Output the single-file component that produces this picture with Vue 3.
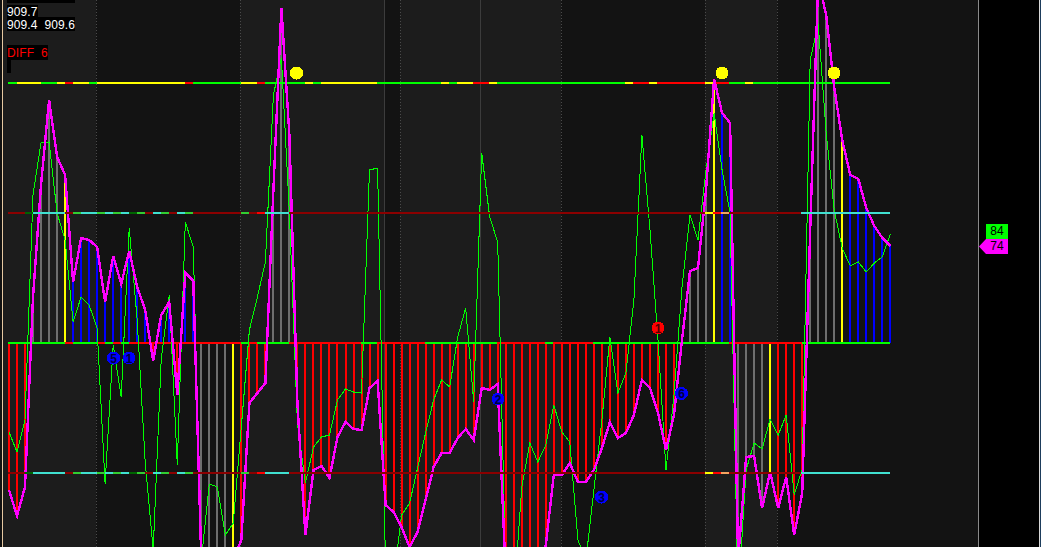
<script setup>
const H = 547
const xAt = (k) => 9 + 8.012 * k

const magenta = [490,516,487,297,185,100,157,175,282,238,240,247,302,256,284,251,287,310,361,315,302,395,273,281,
  560,600,600,600,560,540,403,393,383,190,8,135,403,535,470,466,478,437,422,429,430,388,381,505,512,527,547,532,500,467,453,453,438,429,440,388,390,384,
  575,600,600,600,570,545,475,475,463,482,482,470,448,422,438,433,415,380,388,413,450,415,340,271,268,190,79,113,123,560,457,456,508,472,508,477,535,493,230,-20,15,87,140,175,179,208,226,238,246]

const greenLine = [432,452,420,195,143,142,213,240,322,297,305,328,484,345,397,228,320,462,550,360,295,465,222,247,
  560,484,487,535,523,427,330,297,262,95,58,213,423,483,447,437,435,400,389,392,393,170,168,570,580,515,503,468,433,400,380,387,337,308,402,153,217,242,
  570,600,487,443,462,445,405,432,442,540,560,490,420,337,393,373,300,135,230,340,470,395,287,215,240,170,113,170,213,600,470,443,449,419,435,415,495,469,60,24,133,210,248,266,262,272,263,257,234]

const colorOf = (k) => {
  const x = 9 + 8 * k
  const ranges = [
    [9,25,'#f00'],[33,57,'#6e6e6e'],[65,65,'#ff0'],[73,145,'#00f'],[153,153,'#f00'],[161,169,'#00f'],[177,177,'#f00'],[185,193,'#00f'],
    [201,225,'#6e6e6e'],[233,233,'#ff0'],[241,265,'#f00'],[273,289,'#6e6e6e'],[297,673,'#f00'],[681,705,'#6e6e6e'],[713,713,'#ff0'],[721,729,'#00f'],
    [737,761,'#6e6e6e'],[769,769,'#ff0'],[777,801,'#f00'],[809,833,'#6e6e6e'],[841,841,'#ff0'],[849,889,'#00f'],
  ]
  const r = ranges.find((v) => x >= v[0] && x <= v[1])
  return r ? r[2] : '#f00'
}

const ZERO = 343
const bars = magenta.map((y, k) => ({
  x: Math.round(xAt(k)) - 1,
  y: Math.min(y, ZERO),
  h: Math.abs(y - ZERO),
  c: colorOf(k),
}))

const pts = (a) => a.map((y, k) => `${xAt(k).toFixed(1)},${y}`).join(' ')
const magentaPts = pts(magenta)
const greenPts = pts(greenLine)

const bands = [
  [3,96,'#1c1c1c'],[96,240,'#131313'],[240,384,'#1c1c1c'],[384,400,'#131313'],[400,561,'#1c1c1c'],[561,705,'#131313'],[705,777,'#1c1c1c'],[777,978,'#131313'],
].map(([a, b, c]) => ({ x: a, w: b - a, c }))
const dotted = [96, 240, 400, 561, 705, 777]
const solid = [384, 480]

const Y = '#ff0', R = '#f00', G = '#0f0', D = '#8b0000', C = '#40e0d0', L = '#32cd32', K = '#006400', O = '#f4a460'
const seg = (stops) => stops.map((s, i) => i + 1 < stops.length ? { a: s[0], b: stops[i + 1][0], c: s[1] } : null).filter(Boolean)

const top = seg([[8,G],[17,Y],[41,G],[57,Y],[65,R],[73,Y],[89,G],[97,Y],[185,R],[193,G],[241,Y],[257,R],[265,G],[305,Y],[313,G],[321,Y],[377,G],[441,Y],[449,G],[457,Y],[473,R],[489,Y],[497,G],[625,Y],[633,R],[649,Y],[657,R],[705,Y],[713,R],[729,G],[745,Y],[753,G],[890,G]])
const zero = seg([[8,G],[65,R],[73,G],[97,R],[105,G],[113,R],[121,G],[129,R],[241,G],[249,R],[257,G],[289,R],[361,G],[377,R],[425,G],[497,R],[545,G],[553,R],[593,G],[729,R],[802,G],[890,G]])
const band = seg([[8,D],[25,K],[33,C],[65,D],[73,L],[81,C],[97,L],[105,C],[113,L],[121,C],[129,K],[137,L],[145,D],[153,C],[161,L],[169,D],[177,C],[185,L],[193,D],[241,L],[249,D],[257,R],[265,C],[289,D],[705,Y],[713,R],[721,O],[729,D],[801,C],[890,C]])

const linesUnder = [
  ...top.map((s) => ({ ...s, y: 82 })),
  ...zero.map((s) => ({ ...s, y: 342 })),
]
const linesOver = [
  ...band.map((s) => ({ ...s, y: 212 })),
  ...band.map((s) => ({ ...s, y: 472 })),
]

const dots = [[296.5,73],[722,73],[834,73]]
const marks = [
  { x: 113.5, y: 358, t: '5', c: '#00f', n: '#00003c' },
  { x: 129, y: 358, t: '1', c: '#00f', n: '#00003c' },
  { x: 498, y: 399, t: '2', c: '#00f', n: '#00003c' },
  { x: 601.5, y: 497, t: '3', c: '#00f', n: '#00003c' },
  { x: 681.5, y: 393.5, t: '6', c: '#00f', n: '#00003c' },
  { x: 658, y: 328, t: '1', c: '#f00', n: '#500000' },
]
</script>

<template>
  <div class="screen">
    <div class="edge"></div>
    <div class="chart">
      <svg class="plot" width="975" :height="H" viewBox="3 0 975 547" shape-rendering="crispEdges">
        <rect v-for="b in bands" :key="b.x" :x="b.x" y="0" :width="b.w" :height="H" :fill="b.c" />
        <line v-for="x in dotted" :key="'d'+x" :x1="x+0.5" :x2="x+0.5" y1="0" :y2="H" stroke="#4a4a4a" stroke-dasharray="1 2" />
        <line v-for="x in solid" :key="'s'+x" :x1="x+0.5" :x2="x+0.5" y1="0" :y2="H" stroke="#3c3c3c" />
        <rect v-for="(b, i) in bars" :key="'b'+i" :x="b.x" :y="b.y" width="2" :height="b.h" :fill="b.c" />
        <rect v-for="(s, i) in linesUnder" :key="'u'+i" :x="s.a" :y="s.y" :width="s.b-s.a" height="2" :fill="s.c" />
        <polyline :points="greenPts" fill="none" stroke="#0f0" stroke-width="1" />
        <polyline :points="magentaPts" fill="none" stroke="#f0f" stroke-width="2.4" />
        <rect v-for="(s, i) in linesOver" :key="'o'+i" :x="s.a" :y="s.y" :width="s.b-s.a" height="2" :fill="s.c" />
        <circle v-for="d in dots" :key="d[0]" :cx="d[0]" :cy="d[1]" r="6.5" fill="#ff0" />
        <g v-for="(m, i) in marks" :key="'m'+i">
          <circle :cx="m.x" :cy="m.y" r="6.5" :fill="m.c" />
          <text :x="m.x" :y="m.y + 4.5" text-anchor="middle" class="mark-text" :fill="m.n">{{ m.t }}</text>
        </g>
      </svg>
      <div class="legend">
        <div class="row clipped"><span>909.5&nbsp;&nbsp;909.8</span></div>
        <div class="row first"><span>909.7</span></div>
        <div class="row"><span>909.4&nbsp;&nbsp;909.6</span></div>
        <div class="row diff"><span>DIFF&nbsp;&nbsp;6</span></div>
        <div class="stub"></div>
      </div>
    </div>
    <div class="axis">
      <div class="tag green">84</div>
      <div class="tag pink">74</div>
    </div>
    <div class="rim"></div>
  </div>
</template>

<style scoped>
.screen {
  display: flex;
  width: 1041px;
  height: 547px;
  overflow: hidden;
  background: #000;
  font-family: "Liberation Sans", Arial, sans-serif;
  font-size: 12px;
}
.edge {
  flex: 0 0 3px;
  box-sizing: border-box;
  border-right: 1px solid #e6c9a2;
  background: #111;
}
.chart {
  position: relative;
  flex: 0 0 975px;
}
.plot {
  display: block;
}
.mark-text {
  font-family: "Liberation Sans", Arial, sans-serif;
  font-size: 12px;
  font-weight: bold;
}
.legend {
  position: absolute;
  left: 4px;
  top: 0;
  display: flex;
  flex-direction: column;
  align-items: flex-start;
  color: #fff;
  line-height: 16px;
  letter-spacing: 0.1px;
}
.row {
  display: flex;
  background: #000;
  height: 14px;
}
.row.clipped {
  height: 3px;
  align-items: flex-end;
  overflow: hidden;
}
.row.clipped span {
  display: block;
  flex: none;
  height: 14px;
  line-height: 14px;
}
.row.first {
  margin-top: 2px;
  height: 12px;
  line-height: 14px;
}
.row.diff {
  color: #f00;
  margin-top: 14px;
  height: 15px;
  line-height: 17px;
}
.stub {
  width: 4px;
  height: 13px;
  background: #000;
}
.axis {
  flex: 1;
  box-sizing: border-box;
  border-left: 1px solid #8a8a8a;
  padding-top: 224px;
  display: flex;
  flex-direction: column;
  align-items: flex-end;
  padding-right: 31px;
  background: #000;
  color: #000;
}
.tag {
  height: 15px;
  line-height: 15px;
  text-align: center;
  font-size: 12px;
}
.green {
  width: 22px;
  background: #0f0;
}
.pink {
  width: 29px;
  box-sizing: border-box;
  padding-left: 7px;
  background: #f0f;
  clip-path: polygon(7px 0, 100% 0, 100% 100%, 7px 100%, 0 50%);
}
.rim {
  flex: 0 0 2px;
  box-sizing: border-box;
  border-left: 1px solid #d8d8d8;
  background: #1d3d5c;
}
</style>
